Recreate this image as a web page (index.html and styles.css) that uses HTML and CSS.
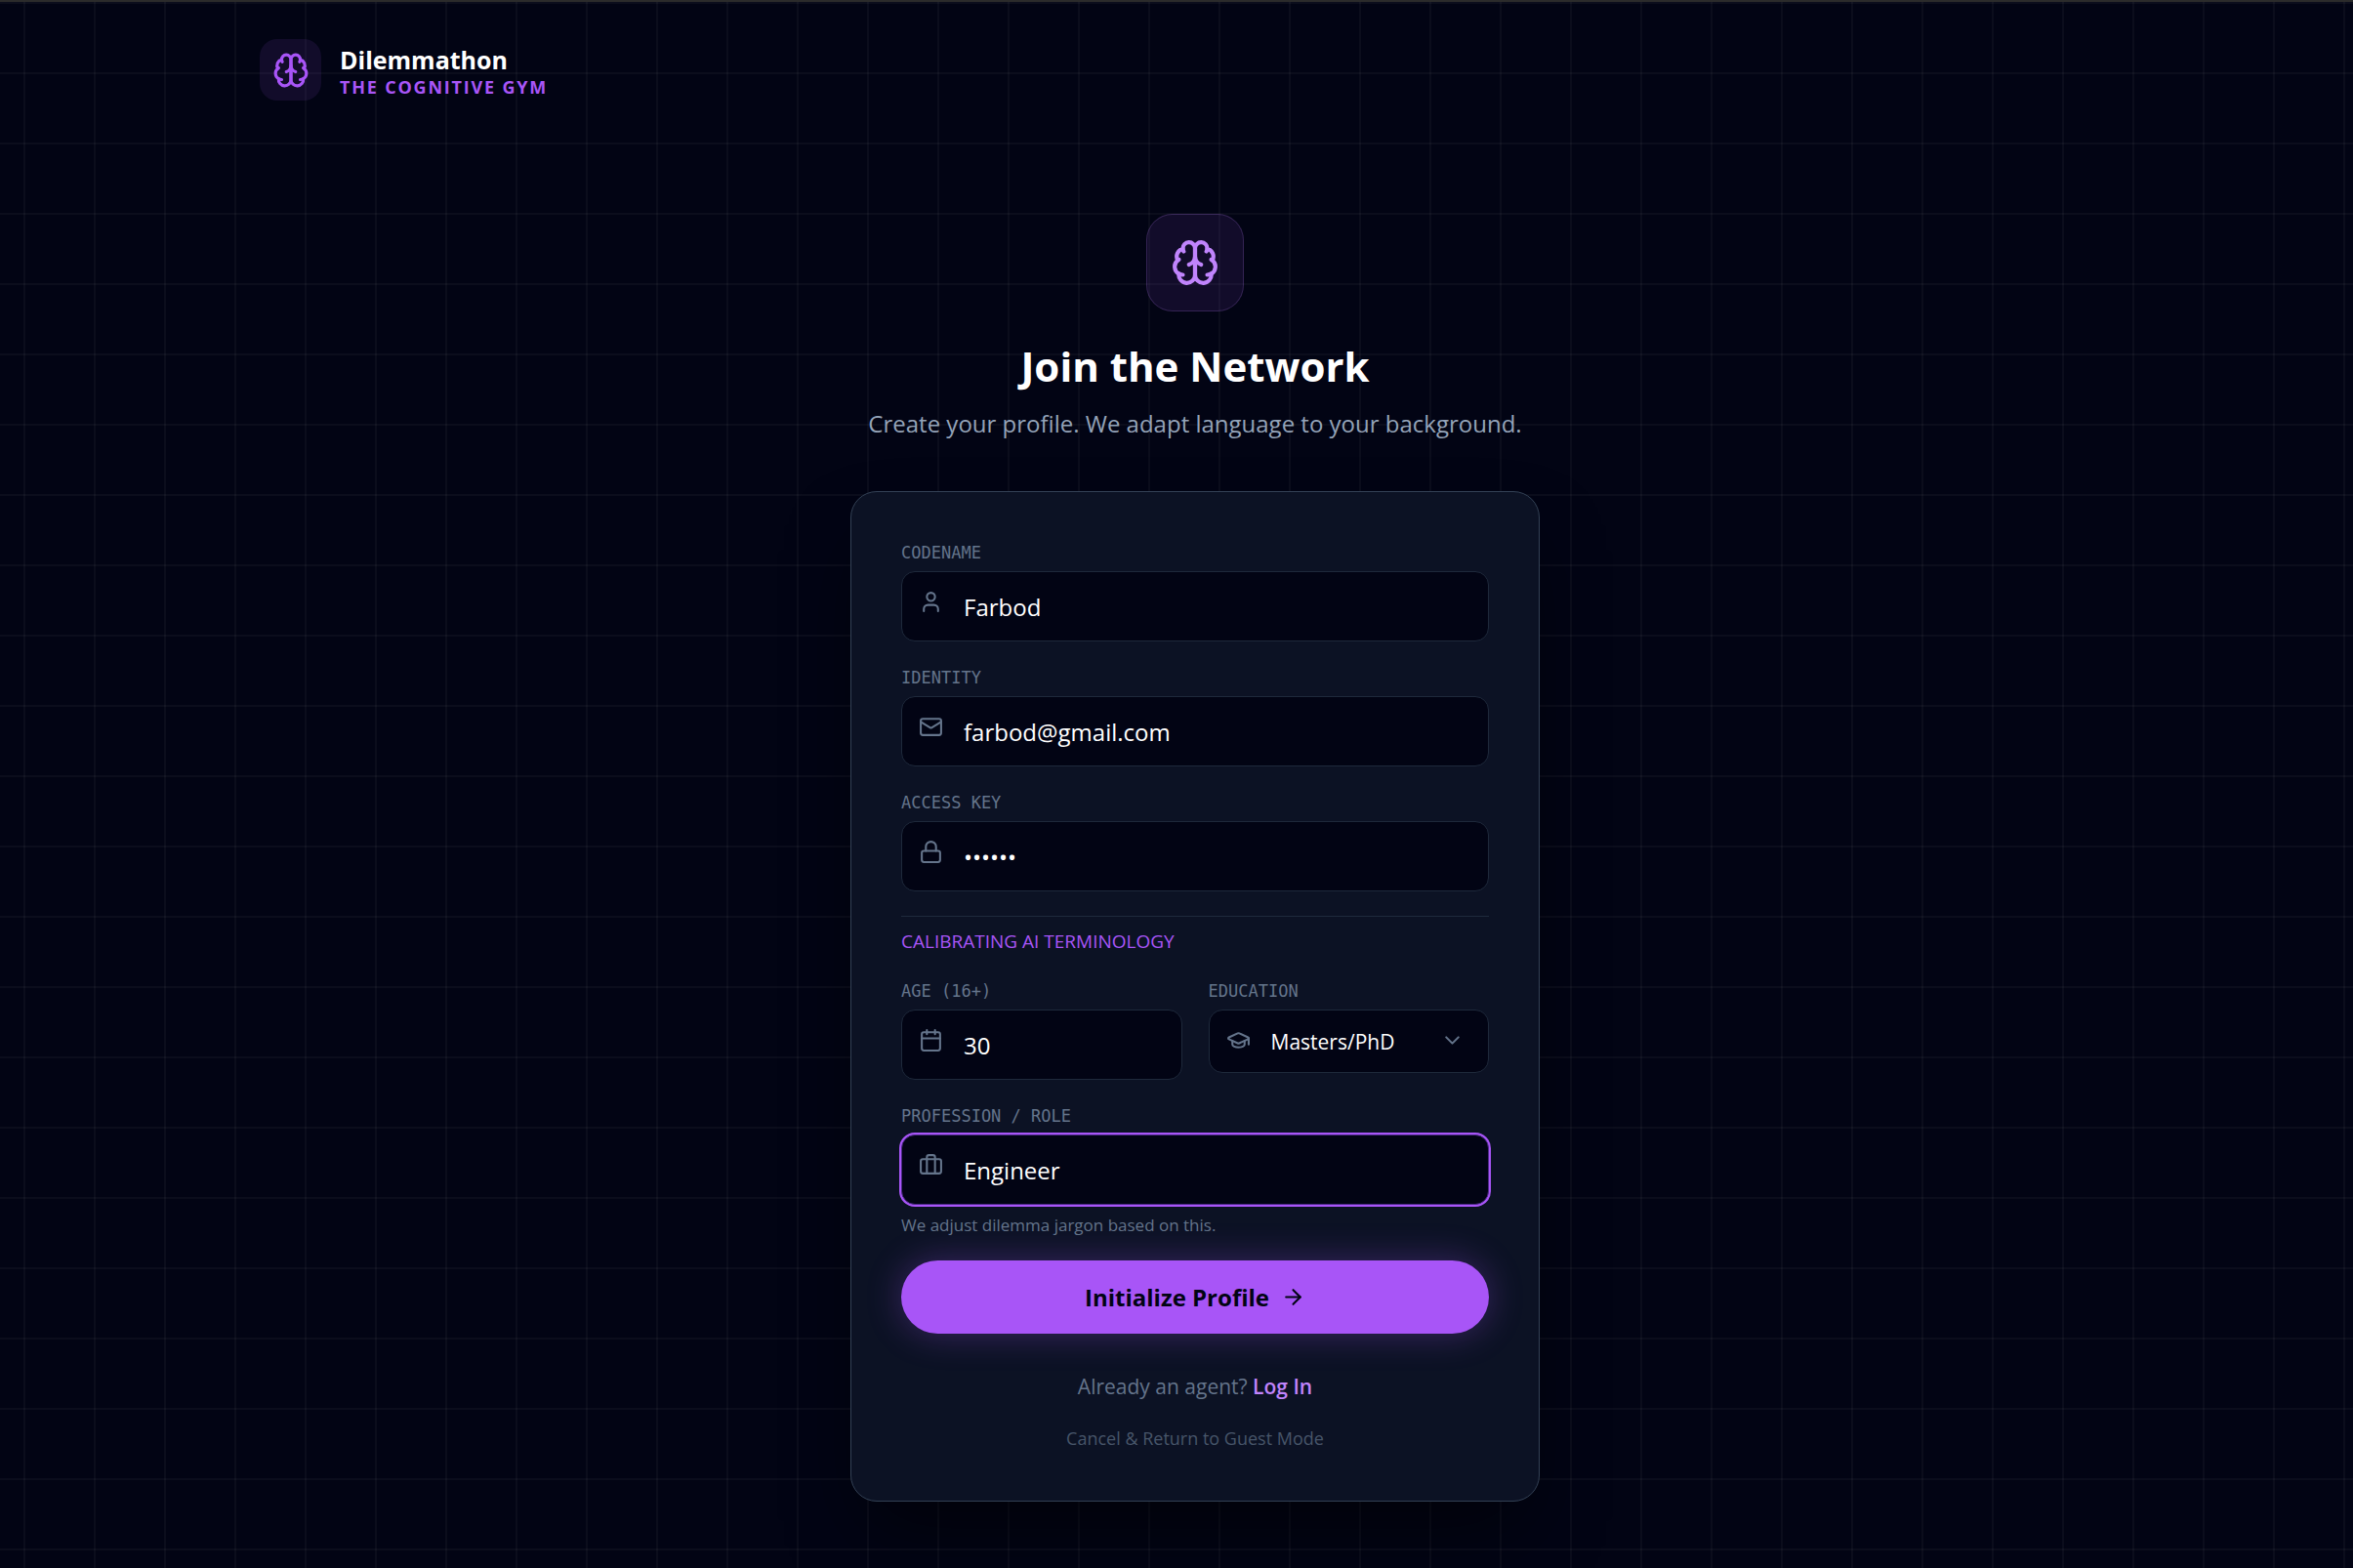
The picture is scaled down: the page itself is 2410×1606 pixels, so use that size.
FILE: index.html
```html
<!DOCTYPE html>
<html lang="en">
<head>
  <meta charset="UTF-8" />
  <meta name="viewport" content="width=device-width, initial-scale=1" />
  <title>Dilemmathon - Join the Network</title>
  <link rel="stylesheet" href="styles.css">
</head>
<body>

  <!-- Shared icon shapes -->
  <svg class="sprite" aria-hidden="true">
    <symbol id="icon-brain" viewBox="0 0 24 24">
      <path d="M12 5a3 3 0 1 0-5.997.125 4 4 0 0 0-2.526 5.77 4 4 0 0 0 .556 6.588A4 4 0 1 0 12 18Z" />
      <path d="M12 5a3 3 0 1 1 5.997.125 4 4 0 0 1 2.526 5.77 4 4 0 0 1-.556 6.588A4 4 0 1 1 12 18Z" />
      <path d="M15 13a4.5 4.5 0 0 1-3-4 4.5 4.5 0 0 1-3 4" />
      <path d="M17.599 6.5a3 3 0 0 0 .399-1.375" />
      <path d="M6.003 5.125A3 3 0 0 0 6.401 6.5" />
      <path d="M3.477 10.896a4 4 0 0 1 .585-.396" />
      <path d="M19.938 10.5a4 4 0 0 1 .585.396" />
      <path d="M6 18a4 4 0 0 1-1.967-.516" />
      <path d="M19.967 17.484A4 4 0 0 1 18 18" />
    </symbol>
  </svg>

  <header class="topbar">
    <div class="brand">
      <div class="brand-logo"><svg class="icon"><use href="#icon-brain" /></svg></div>
      <div class="brand-text">
        <div class="brand-name">Dilemmathon</div>
        <div class="brand-tag">The Cognitive Gym</div>
      </div>
    </div>
  </header>

  <main>
    <div class="hero-logo"><svg class="icon"><use href="#icon-brain" /></svg></div>
    <h1>Join the Network</h1>
    <p class="subtitle">Create your profile. We adapt language to your background.</p>

    <form class="card" id="signupForm">
      <div class="field">
        <label for="codename">Codename</label>
        <div class="control">
          <svg class="icon" viewBox="0 0 24 24"><path d="M19 21v-2a4 4 0 0 0-4-4H9a4 4 0 0 0-4 4v2" /><circle cx="12" cy="7" r="4" /></svg>
          <input type="text" id="codename" name="codename" value="Farbod" />
        </div>
      </div>

      <div class="field">
        <label for="identity">Identity</label>
        <div class="control">
          <svg class="icon" viewBox="0 0 24 24"><rect width="20" height="16" x="2" y="4" rx="2" /><path d="m22 7-8.97 5.7a1.94 1.94 0 0 1-2.06 0L2 7" /></svg>
          <input type="email" id="identity" name="identity" value="farbod@gmail.com" />
        </div>
      </div>

      <div class="field">
        <label for="accessKey">Access Key</label>
        <div class="control">
          <svg class="icon" viewBox="0 0 24 24"><rect width="18" height="11" x="3" y="11" rx="2" /><path d="M7 11V7a5 5 0 0 1 10 0v4" /></svg>
          <input type="password" id="accessKey" name="accessKey" value="agent7" />
        </div>
      </div>

      <!-- Background used to tune the wording -->
      <div class="calibration">
        <p class="section-title">Calibrating AI Terminology</p>
        <div class="row">
          <div class="field">
            <label for="age">Age (16+)</label>
            <div class="control">
              <svg class="icon" viewBox="0 0 24 24"><path d="M8 2v4M16 2v4" /><rect width="18" height="18" x="3" y="4" rx="2" /><path d="M3 10h18" /></svg>
              <input type="number" id="age" name="age" min="16" value="30" />
            </div>
          </div>
          <div class="field">
            <label for="education">Education</label>
            <div class="control">
              <svg class="icon" viewBox="0 0 24 24"><path d="M21.42 10.922a1 1 0 0 0-.019-1.838L12.83 5.18a2 2 0 0 0-1.66 0L2.6 9.08a1 1 0 0 0 0 1.832l8.57 3.908a2 2 0 0 0 1.66 0z" /><path d="M22 10v6" /><path d="M6 12.5V16a6 3 0 0 0 12 0v-3.5" /></svg>
              <select id="education" name="education">
                <option>High School</option>
                <option>Bachelors</option>
                <option selected>Masters/PhD</option>
              </select>
              <svg class="icon chevron" viewBox="0 0 24 24"><path d="m6 9 6 6 6-6" /></svg>
            </div>
          </div>
        </div>
        <div class="field">
          <label for="profession">Profession / Role</label>
          <div class="control">
            <svg class="icon" viewBox="0 0 24 24"><path d="M16 20V4a2 2 0 0 0-2-2h-4a2 2 0 0 0-2 2v16" /><rect width="20" height="14" x="2" y="6" rx="2" /></svg>
            <input type="text" class="active" id="profession" name="profession" value="Engineer" />
          </div>
          <p class="hint">We adjust dilemma jargon based on this.</p>
        </div>
      </div>

      <button type="button" class="submit">
        Initialize Profile
        <svg class="icon" viewBox="0 0 24 24"><path d="M5 12h14" /><path d="m12 5 7 7-7 7" /></svg>
      </button>

      <p class="login">Already an agent? <a href="#">Log In</a></p>
      <a class="cancel" href="#">Cancel &amp; Return to Guest Mode</a>
    </form>
  </main>

</body>
</html>
```
FILE: styles.css
```css
* {
  box-sizing: border-box;
}
body {
  margin: 0;
  min-height: 100vh;
  padding-left: 38px;
  border-top: 2px solid #2b2b2b;
  background-color: #020414;
  background-image:
    linear-gradient(to right, rgba(255, 255, 255, 0.035) 2px, transparent 2px),
    linear-gradient(to bottom, rgba(255, 255, 255, 0.035) 2px, transparent 2px);
  background-size: 72px 72px;
  background-position: 24px 2px;
  color: #fff;
  font-family: "Open Sans", sans-serif;
}
.sprite {
  display: none;
}
.icon {
  fill: none;
  stroke: currentColor;
  stroke-width: 2;
  stroke-linecap: round;
  stroke-linejoin: round;
}
p, h1 {
  margin: 0;
}
a {
  text-decoration: none;
}

.topbar {
  max-width: 1916px;
  margin: 0 auto;
  padding: 38px 0;
}
.brand {
  display: flex;
  align-items: center;
  gap: 19px;
}
.brand-logo {
  display: grid;
  place-items: center;
  width: 63px;
  height: 63px;
  border-radius: 18px;
  background: rgba(168, 85, 247, 0.1);
  color: #a855f7;
}
.brand-logo .icon {
  width: 38px;
  height: 38px;
}
.brand-text {
  padding-top: 3px;
}
.brand-name {
  font-size: 25px;
  font-weight: 700;
  line-height: 32px;
}
.brand-tag {
  color: #a855f7;
  font-size: 18px;
  font-weight: 700;
  line-height: 24px;
  letter-spacing: 0.1em;
  text-transform: uppercase;
}

main {
  max-width: 706px;
  margin: 0 auto;
  padding: 78px 0 68px;
}
.hero-logo {
  display: grid;
  place-items: center;
  width: 100px;
  height: 100px;
  margin: 0 auto;
  border: 1px solid rgba(192, 132, 252, 0.2);
  border-radius: 27px;
  background: rgba(168, 85, 247, 0.1);
  color: #c084fc;
}
.hero-logo .icon {
  width: 50px;
  height: 50px;
}
h1 {
  margin-top: 26px;
  font-size: 42px;
  font-weight: 700;
  line-height: 60px;
  text-align: center;
}
.subtitle {
  margin-top: 11px;
  color: #94a3b8;
  font-size: 24px;
  line-height: 36px;
  text-align: center;
}

.card {
  margin-top: 51px;
  padding: 49px 51px 50px;
  border: 1px solid #334155;
  border-radius: 27px;
  background: #0c1224;
  box-shadow: 0 40px 80px -20px rgba(0, 0, 0, 0.6);
}
.field + .field {
  margin-top: 24px;
}
.row {
  display: grid;
  grid-template-columns: 1fr 1fr;
  gap: 27px;
  align-items: start;
  margin: 12px 0 24px;
}
.row .field {
  margin: 0;
}
label {
  display: block;
  margin-bottom: 5px;
  color: #64748b;
  font-family: "DejaVu Sans Mono", monospace;
  font-size: 17px;
  line-height: 27px;
  text-transform: uppercase;
}
.control {
  position: relative;
}
.control .icon {
  position: absolute;
  top: 19px;
  left: 18px;
  width: 25px;
  height: 25px;
  color: #64748b;
}
.control .chevron {
  right: 25px;
  left: auto;
}
input, select {
  display: block;
  width: 100%;
  height: 72px;
  padding: 0 18px 0 63px;
  border: 1px solid #1e293b;
  border-radius: 14px;
  outline: none;
  background: #020414;
  color: #fff;
  font-family: inherit;
  font-size: 24px;
  appearance: none;
}
input[type="number"] {
  appearance: textfield;
}
select {
  height: 65px;
  font-size: 21px;
}
input.active {
  border-color: #4c2a85;
  box-shadow: 0 0 0 2px #a855f7;
}

.calibration {
  margin-top: 25px;
  border-top: 1px solid #1e293b;
}
.section-title {
  padding: 12px 0;
  color: #a855f7;
  font-size: 19px;
  line-height: 27px;
  text-transform: uppercase;
}
.hint {
  margin-top: 9px;
  color: #64748b;
  font-size: 17px;
  line-height: 24px;
}
.submit {
  display: flex;
  align-items: center;
  justify-content: center;
  gap: 12px;
  width: 100%;
  margin-top: 24px;
  padding: 20px;
  border: 0;
  border-radius: 999px;
  background: #a855f7;
  box-shadow: 0 0 36px rgba(168, 85, 247, 0.3);
  color: #020414;
  font-family: inherit;
  font-size: 24px;
  font-weight: 700;
  line-height: 35px;
}
.submit .icon {
  width: 25px;
  height: 25px;
}
.login {
  margin-top: 38px;
  color: #64748b;
  font-size: 21px;
  line-height: 32px;
  text-align: center;
}
.login a {
  color: #c084fc;
  font-weight: 600;
}
.cancel {
  display: block;
  margin-top: 24px;
  color: #475569;
  font-size: 18px;
  line-height: 27px;
  text-align: center;
}
```
